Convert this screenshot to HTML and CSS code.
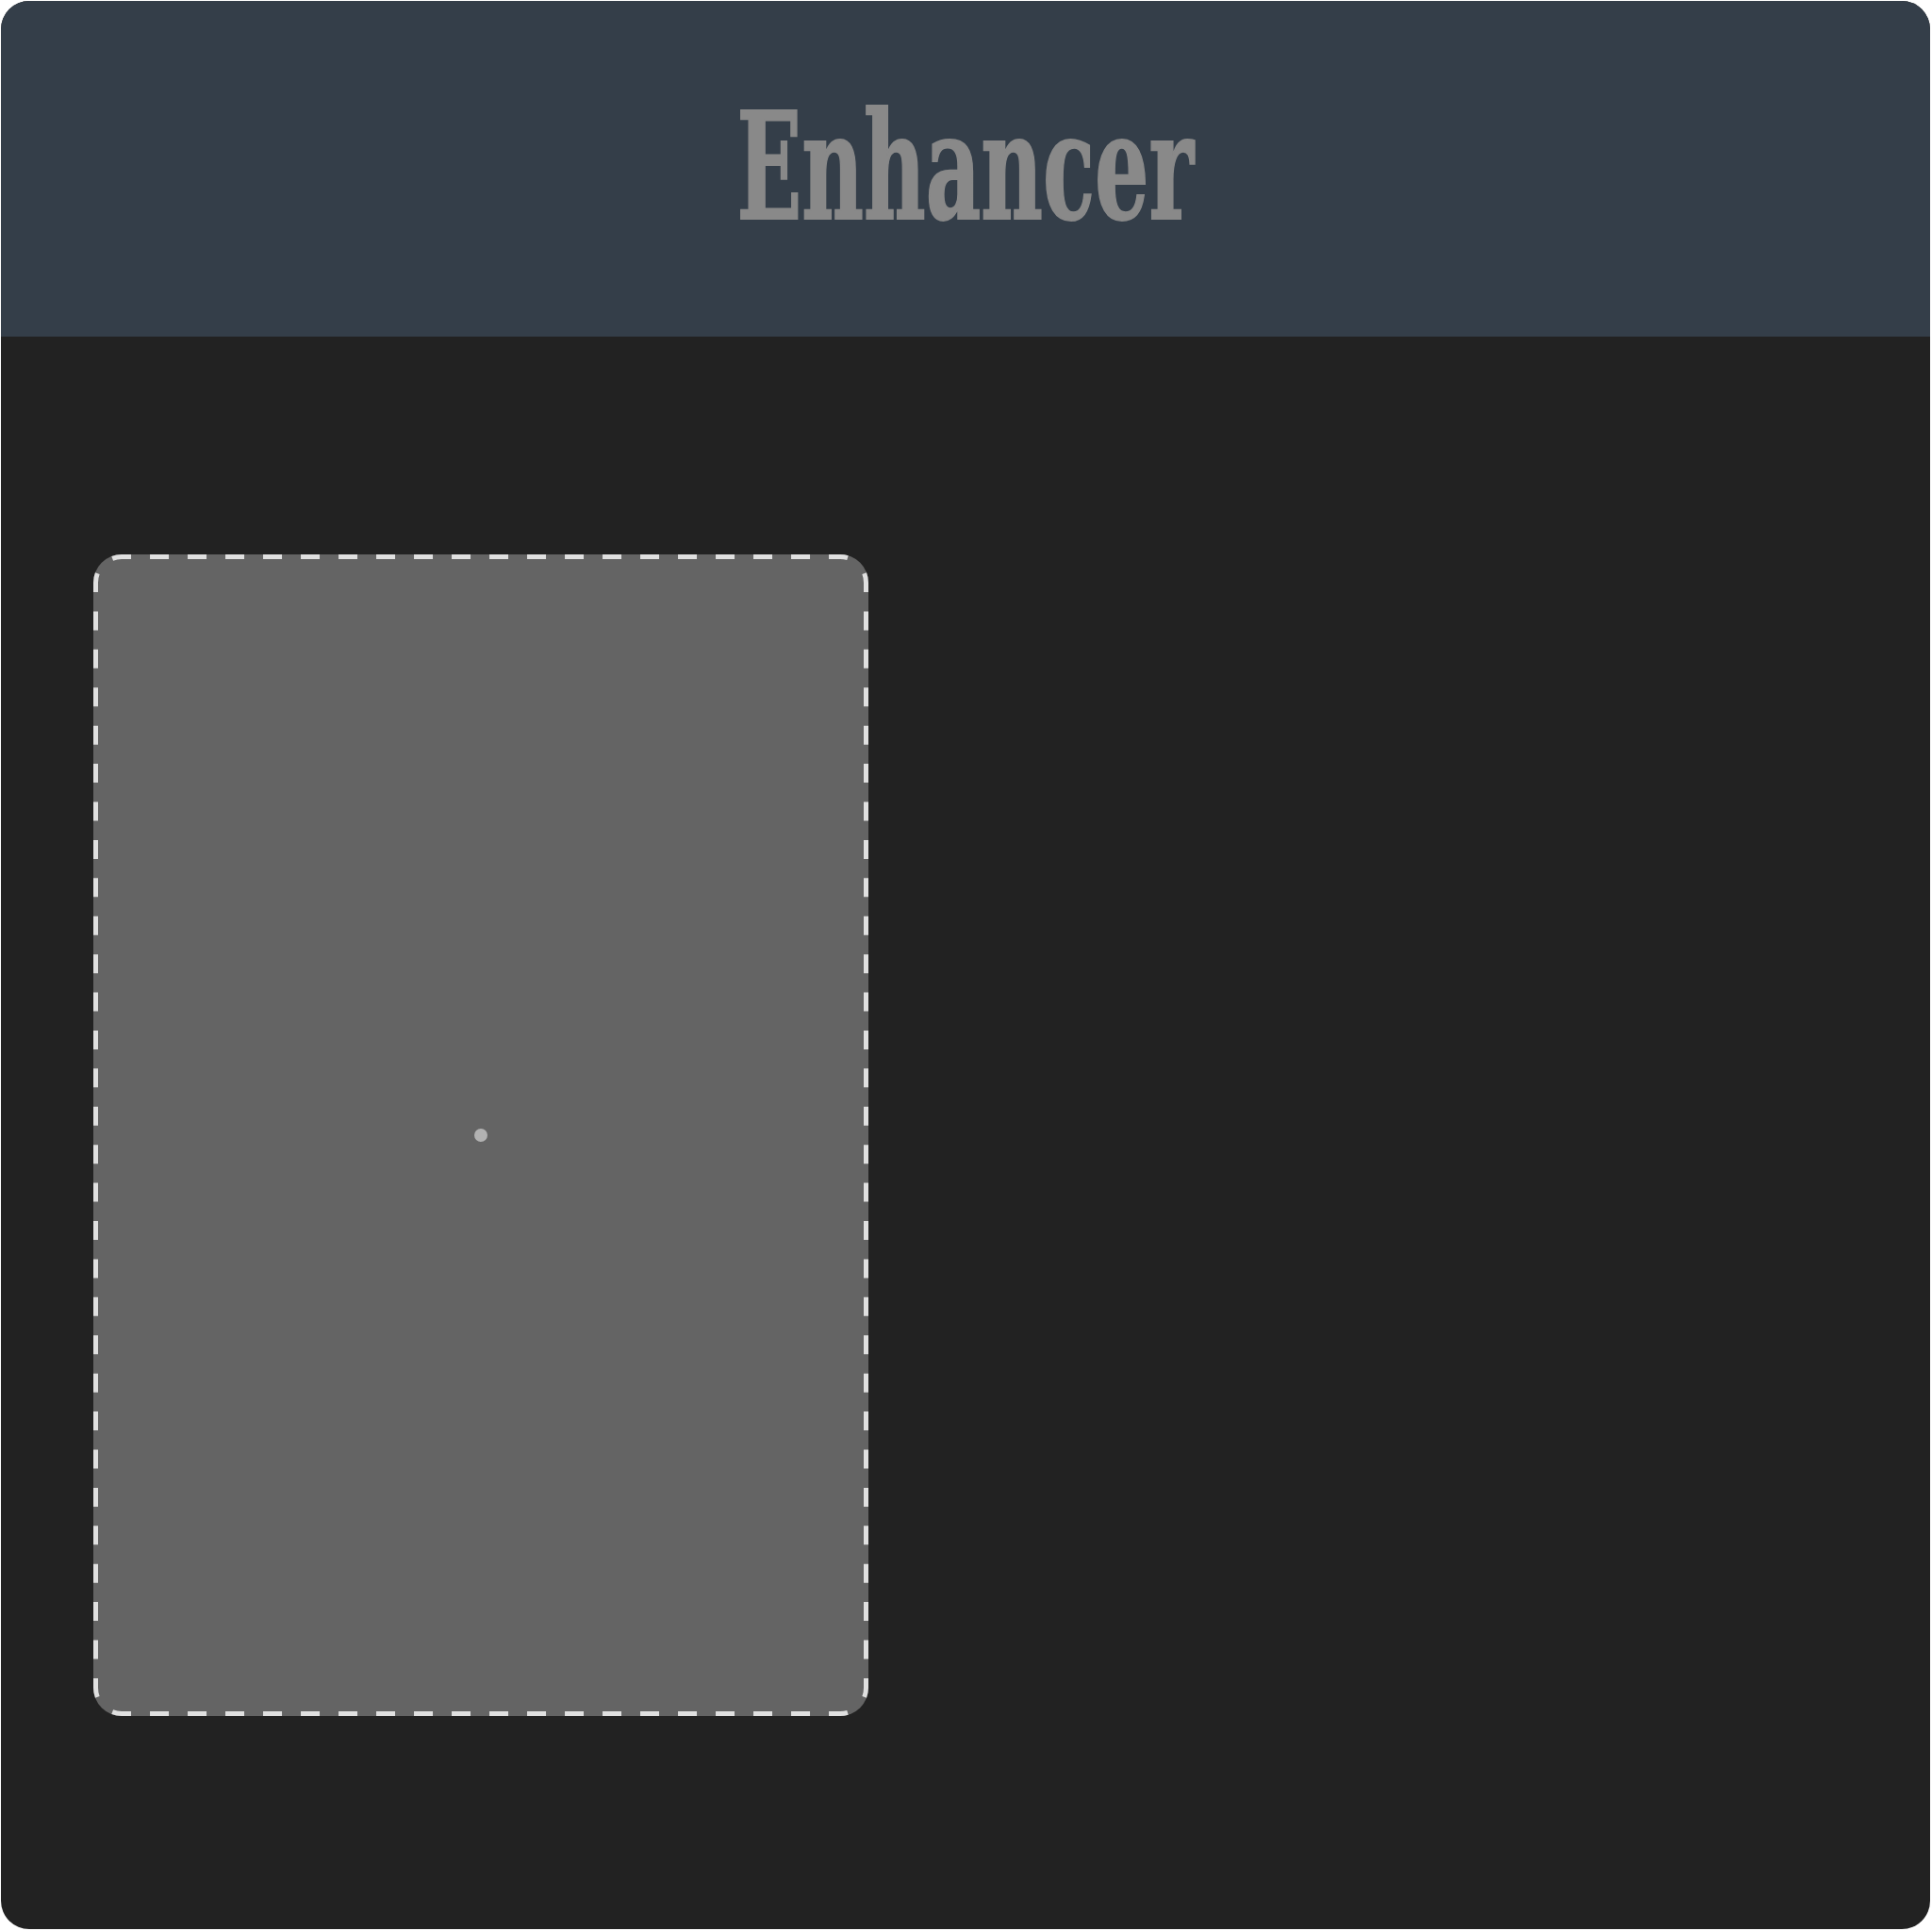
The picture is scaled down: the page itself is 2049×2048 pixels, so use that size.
FILE: index.html
```html
<!DOCTYPE html>
<html lang="en">
<head>
  <meta charset="UTF-8">
  <title>Enhancer</title>
  <link rel="stylesheet" href="styles.css">
</head>
<body>
  <div class="app">
    <header class="topbar">
      <h1 class="title">Enhancer</h1>
    </header>
    <main class="content">
      <div class="dropzone">
        <svg class="dashes" width="822" height="1232" viewBox="0 0 822 1232">
          <path d="M20.2 4.3A27.5 27.5 0 0 1 30 2.5H792A27.5 27.5 0 0 1 801.8 4.3" />
          <path d="M20.2 1227.7A27.5 27.5 0 0 0 30 1229.5H792A27.5 27.5 0 0 0 801.8 1227.700" />
          <path class="side" d="M4.3 20.2A27.5 27.5 0 0 0 2.500 30V1202A27.5 27.5 0 0 0 4.3 1211.800" />
          <path class="side" d="M817.7 20.2A27.5 27.5 0 0 1 819.500 30V1202A27.5 27.5 0 0 1 817.700 1211.800" />
        </svg>
        <span class="dot"></span>
      </div>
    </main>
  </div>
</body>
</html>
```

FILE: styles.css
```css
html, body {
  margin: 0;
  padding: 0;
  background-color: #fff;
}
.app {
  width: 2046px;
  height: 2045px;
  margin: 1px;
  border-radius: 30px;
  overflow: hidden;
  background-color: #222222;
  display: flex;
  flex-direction: column;
}
.topbar {
  height: 356px;
  background-color: #343e49;
  display: flex;
  justify-content: center;
  align-items: flex-start;
  overflow: hidden;
}
.title {
  margin: 98px 0 0;
  font-family: "DejaVu Serif", serif;
  font-stretch: condensed;
  font-size: 157px;
  line-height: 1;
  font-weight: bold;
  color: #898989;
  -webkit-text-stroke: 2px #898989;
  transform: scaleX(0.64);
}
.content {
  padding: 231px 0 0 98px;
}
.dropzone {
  position: relative;
  width: 822px;
  height: 1232px;
  border-radius: 30px;
  background-color: #646464;
  display: flex;
  justify-content: center;
  align-items: center;
}
.dashes {
  position: absolute;
  top: 0;
  left: 0;
  fill: none;
  stroke: #e0e0e0;
  stroke-width: 5;
  stroke-dasharray: 20 20;
}
.dashes .side {
  stroke-dasharray: 20 20.41;
}
.dot {
  width: 14px;
  height: 14px;
  border-radius: 50%;
  background-color: #b2b2b2;
}
```
